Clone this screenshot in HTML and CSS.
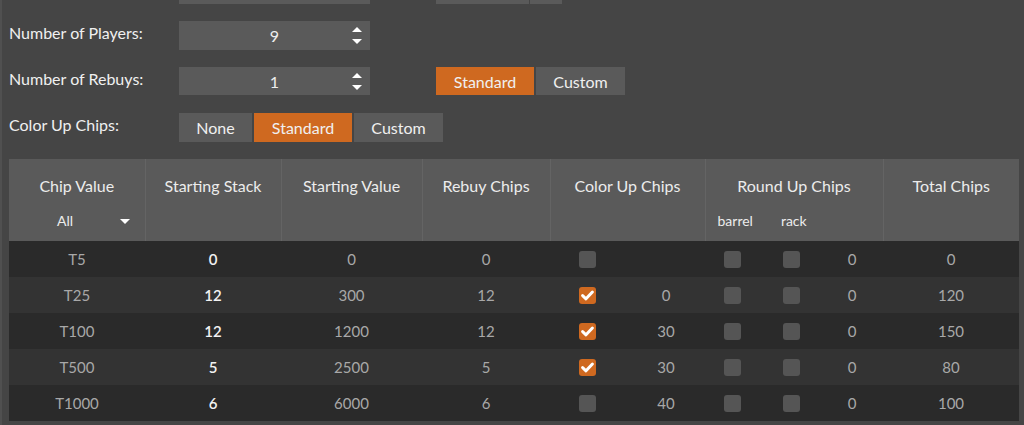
FILE: index.html
```html
<!DOCTYPE html>
<html lang="en">
<head>
    <meta charset="UTF-8">
    <title>Chip Calculator</title>
    <link rel="stylesheet" href="styles.css">
</head>
<body>
    <div class="page">
        <div class="form">
            <div class="form-row cut">
                <label></label>
                <div class="num-input"></div>
                <div class="select-stub">
                    <span class="sel"></span>
                    <span class="sel-btn"></span>
                </div>
            </div>
            <div class="form-row">
                <label>Number of Players:</label>
                <div class="num-input">9
                    <span class="spin"><span class="up"></span><span class="down"></span></span>
                </div>
            </div>
            <div class="form-row">
                <label>Number of Rebuys:</label>
                <div class="num-input">1
                    <span class="spin"><span class="up"></span><span class="down"></span></span>
                </div>
                <div class="btn-group extra">
                    <button class="on">Standard</button>
                    <button class="custom">Custom</button>
                </div>
            </div>
            <div class="form-row">
                <label>Color Up Chips:</label>
                <div class="btn-group">
                    <button class="none">None</button>
                    <button class="on">Standard</button>
                    <button class="custom">Custom</button>
                </div>
            </div>
        </div>

        <table class="chips">
            <colgroup>
                <col style="width: 136px">
                <col style="width: 136px">
                <col style="width: 141px">
                <col style="width: 128px">
                <col style="width: 155px">
                <col style="width: 178px">
                <col style="width: 136px">
            </colgroup>
            <thead>
                <tr>
                    <th>
                        <div class="title">Chip Value</div>
                        <div class="sub sel-all"><span>All</span><span class="caret"></span></div>
                    </th>
                    <th><div class="title">Starting Stack</div></th>
                    <th><div class="title">Starting Value</div></th>
                    <th><div class="title">Rebuy Chips</div></th>
                    <th><div class="title">Color Up Chips</div></th>
                    <th>
                        <div class="title">Round Up Chips</div>
                        <div class="sub round-labels"><span class="barrel">barrel</span><span class="rack">rack</span></div>
                    </th>
                    <th><div class="title">Total Chips</div></th>
                </tr>
            </thead>
            <tbody>
                <tr>
                    <td>T5</td>
                    <td class="stack">0</td>
                    <td>0</td>
                    <td>0</td>
                    <td><div class="color-up"><span class="cb"></span><span class="n"></span></div></td>
                    <td><div class="round-up"><span class="cb"></span><span class="cb"></span><span class="n">0</span></div></td>
                    <td>0</td>
                </tr>
                <tr>
                    <td>T25</td>
                    <td class="stack">12</td>
                    <td>300</td>
                    <td>12</td>
                    <td><div class="color-up"><span class="cb on"><svg viewBox="0 0 17 17"><path d="M3.6 8.6 L7 11.8 L13.4 5"/></svg></span><span class="n">0</span></div></td>
                    <td><div class="round-up"><span class="cb"></span><span class="cb"></span><span class="n">0</span></div></td>
                    <td>120</td>
                </tr>
                <tr>
                    <td>T100</td>
                    <td class="stack">12</td>
                    <td>1200</td>
                    <td>12</td>
                    <td><div class="color-up"><span class="cb on"><svg viewBox="0 0 17 17"><path d="M3.6 8.6 L7 11.8 L13.4 5"/></svg></span><span class="n">30</span></div></td>
                    <td><div class="round-up"><span class="cb"></span><span class="cb"></span><span class="n">0</span></div></td>
                    <td>150</td>
                </tr>
                <tr>
                    <td>T500</td>
                    <td class="stack">5</td>
                    <td>2500</td>
                    <td>5</td>
                    <td><div class="color-up"><span class="cb on"><svg viewBox="0 0 17 17"><path d="M3.6 8.6 L7 11.8 L13.4 5"/></svg></span><span class="n">30</span></div></td>
                    <td><div class="round-up"><span class="cb"></span><span class="cb"></span><span class="n">0</span></div></td>
                    <td>80</td>
                </tr>
                <tr>
                    <td>T1000</td>
                    <td class="stack">6</td>
                    <td>6000</td>
                    <td>6</td>
                    <td><div class="color-up"><span class="cb"></span><span class="n">40</span></div></td>
                    <td><div class="round-up"><span class="cb"></span><span class="cb"></span><span class="n">0</span></div></td>
                    <td>100</td>
                </tr>
            </tbody>
        </table>
    </div>
</body>
</html>
```

FILE: styles.css
```css
body {
    margin: 0;
    background-color: #454545;
    font-family: Lato, "Open Sans", sans-serif;
    font-size: 14px;
    color: #eeeeee;
    overflow: hidden;
    border-left: 2px solid #505050;
    min-height: 100vh;
    box-sizing: border-box;
}

.page {
    display: flow-root;
    padding-left: 7px;
    padding-right: 5px;
}

.form {
    margin-top: -25px;
}

.form-row {
    display: flex;
    align-items: flex-start;
    height: 29px;
    margin-bottom: 17px;
}

.form-row:nth-child(3) {
    height: 28px;
    margin-bottom: 18px;
}

.form-row label {
    width: 170px;
    padding-top: 2px;
    font-size: 16px;
    color: #f0f0f0;
}

.num-input {
    position: relative;
    width: 191px;
    height: 100%;
    background-color: #5a5a5a;
    text-align: center;
    line-height: 29px;
    font-size: 16px;
}

.spin {
    position: absolute;
    right: 8px;
    top: 6px;
    width: 10px;
    height: 17px;
}

.spin .up, .spin .down {
    position: absolute;
    left: 0;
    width: 0;
    height: 0;
    border-left: 5px solid transparent;
    border-right: 5px solid transparent;
}

.spin .up {
    top: 0;
    border-bottom: 5px solid #ffffff;
}

.spin .down {
    bottom: 0;
    border-top: 5px solid #ffffff;
}

.select-stub {
    display: flex;
    margin-left: 66px;
    height: 100%;
    gap: 1px;
}

.select-stub .sel {
    width: 93px;
    background-color: #5a5a5a;
}

.select-stub .sel-btn {
    width: 32px;
    background-color: #5a5a5a;
}

.btn-group {
    display: flex;
    gap: 2px;
    height: 100%;
}

.btn-group.extra {
    margin-left: 66px;
}

.btn-group button {
    width: 98px;
    height: 100%;
    border: none;
    background-color: #5a5a5a;
    color: #f0f0f0;
    font-family: inherit;
    font-size: 16px;
    padding: 0;
    cursor: pointer;
}

.btn-group button.none {
    width: 73px;
}

.btn-group button.custom {
    width: 89px;
}

.btn-group button.on {
    background-color: #cf6920;
}

.chips {
    width: 1010px;
    margin-top: 16px;
    border-collapse: collapse;
    table-layout: fixed;
}

.chips thead th {
    background-color: #5a5a5a;
    border-left: 1px solid #646464;
    font-weight: normal;
    font-size: 16px;
    color: #ececec;
    vertical-align: top;
    padding: 17px 0 10px;
    height: 82px;
    box-sizing: border-box;
}

.chips thead th:first-child {
    border-left: none;
}

.chips .title {
    line-height: 20px;
}

.chips .sub {
    margin-top: 15px;
    line-height: 20px;
    font-size: 14px;
}

.sel-all {
    display: flex;
    justify-content: space-between;
    align-items: center;
    padding: 0 15px 0 48px;
}

.caret {
    width: 0;
    height: 0;
    border-left: 5px solid transparent;
    border-right: 5px solid transparent;
    border-top: 5px solid #ffffff;
}

.round-labels {
    display: flex;
    padding-left: 12px;
}

.round-labels .rack {
    margin-left: 28px;
}

.chips tbody td {
    height: 36px;
    padding: 0;
    text-align: center;
    font-size: 15px;
    color: #a8a8a8;
}

.chips tbody tr:nth-child(odd) {
    background-color: #2a2a2a;
}

.chips tbody tr:nth-child(even) {
    background-color: #333333;
}

.chips td.stack {
    color: #f2f2f2;
    font-weight: 600;
}

.color-up, .round-up {
    display: flex;
    align-items: center;
}

.color-up {
    padding-left: 29px;
}

.color-up .n {
    width: 60px;
    margin-left: 40px;
}

.round-up {
    padding-left: 19px;
}

.round-up .cb + .cb {
    margin-left: 42px;
}

.round-up .n {
    width: 40px;
    margin-left: 32px;
}

.cb {
    display: inline-block;
    width: 17px;
    height: 17px;
    border-radius: 3px;
    background-color: #555555;
}

.cb.on {
    background-color: #cf6920;
}

.cb svg {
    display: block;
    width: 17px;
    height: 17px;
}

.cb svg path {
    fill: none;
    stroke: #ffffff;
    stroke-width: 3;
    stroke-linecap: round;
    stroke-linejoin: round;
}
```
